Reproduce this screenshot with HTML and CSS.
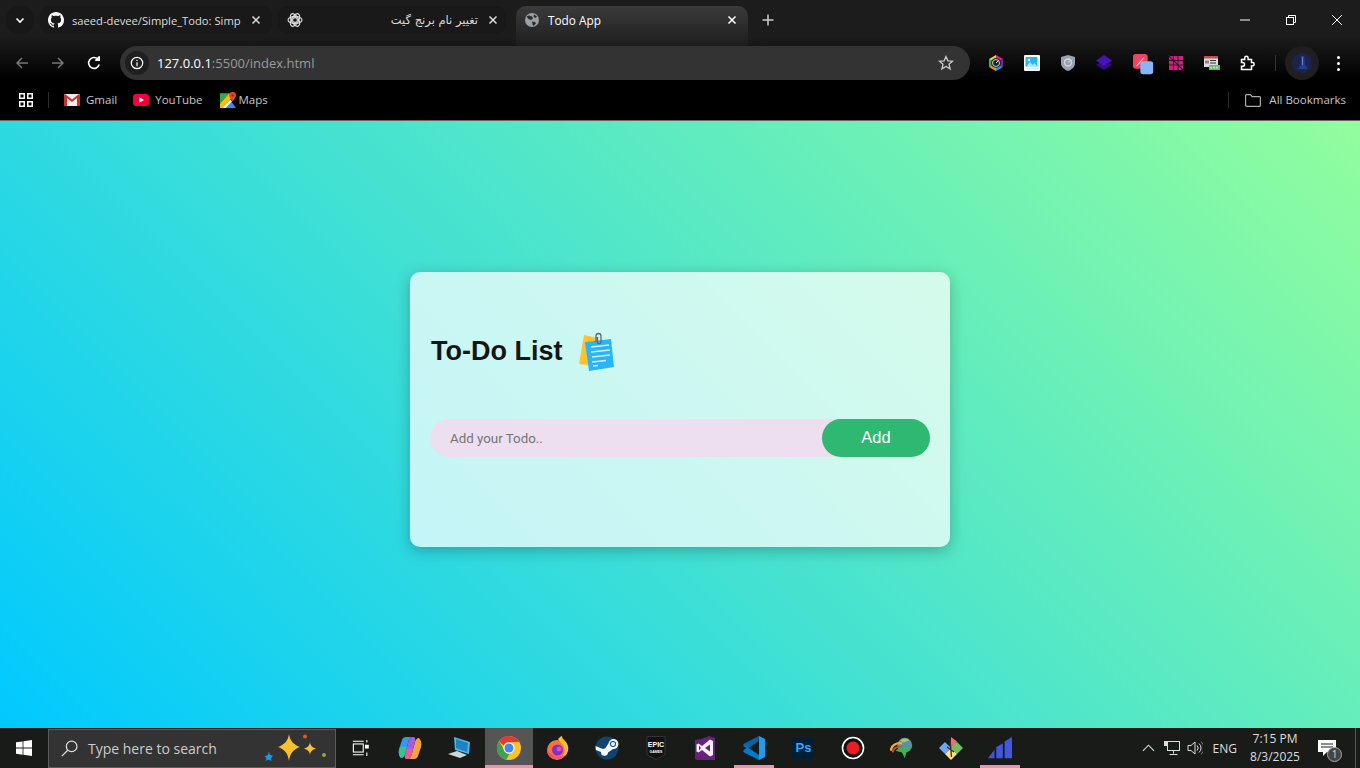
FILE: index.html
```html
<!DOCTYPE html>
<html lang="en">
<head>
<meta charset="UTF-8" />
<meta name="viewport" content="width=device-width, initial-scale=1" />
<title>Todo App</title>
<link rel="stylesheet" href="styles.css">
</head>
<body>

<header class="chrome">
  <!-- Tabs -->
  <div class="tabstrip">
    <div class="tab-menu">
      <svg width="12" height="12" viewBox="0 0 12 12"><path d="M2.5 4.5 6 8l3.5-3.5" fill="none" stroke="#fff" stroke-width="1.6"/></svg>
    </div>
    <div class="tab tab-one">
      <svg class="fav" viewBox="0 0 16 16"><path fill="#fff" d="M8 0C3.58 0 0 3.58 0 8c0 3.54 2.29 6.53 5.47 7.59.4.07.55-.17.55-.38 0-.19-.01-.82-.01-1.49-2.01.37-2.53-.49-2.69-.94-.09-.23-.48-.94-.82-1.13-.28-.15-.68-.52-.01-.53.63-.01 1.08.58 1.23.82.72 1.21 1.87.87 2.33.66.07-.52.28-.87.51-1.07-1.78-.2-3.64-.89-3.64-3.95 0-.87.31-1.59.82-2.15-.08-.2-.36-1.02.08-2.12 0 0 .67-.21 2.2.82.64-.18 1.32-.27 2-.27s1.36.09 2 .27c1.53-1.04 2.2-.82 2.2-.82.44 1.1.16 1.92.08 2.12.51.56.82 1.27.82 2.15 0 3.07-1.87 3.75-3.65 3.95.29.25.54.73.54 1.48 0 1.07-.01 1.93-.01 2.2 0 .21.15.46.55.38A8.01 8.01 0 0 0 16 8c0-4.42-3.58-8-8-8z"/></svg>
      <span class="tab-title">saeed-devee/Simple_Todo: Simp</span>
      <svg class="tab-x" viewBox="0 0 10 10"><path d="M1.5 1.5l7 7m0-7l-7 7" stroke="#ddd" stroke-width="1.5"/></svg>
    </div>
    <div class="tab tab-two">
      <svg class="fav" viewBox="0 0 16 16" fill="none" stroke="#ddd" stroke-width="1.1"><circle cx="8" cy="8" r="2.4"/><ellipse cx="8" cy="8" rx="7" ry="3.6"/><ellipse cx="8" cy="8" rx="7" ry="3.6" transform="rotate(60 8 8)"/><ellipse cx="8" cy="8" rx="7" ry="3.6" transform="rotate(120 8 8)"/></svg>
      <span class="tab-title tab-title-rtl" dir="rtl">تغییر نام برنج گیت</span>
      <svg class="tab-x" viewBox="0 0 10 10"><path d="M1.5 1.5l7 7m0-7l-7 7" stroke="#ddd" stroke-width="1.5"/></svg>
    </div>
    <div class="tab tab-active">
      <svg class="fav" viewBox="0 0 16 16"><circle cx="8" cy="8" r="7" fill="#9aa0a6"/><path fill="#2c2c2c" d="M2.5 4.5 5 3.5l3 1 1 2-2 1.5L4.5 7zM8 9.5l3 .5 1 1.5-2.5 2.5-1-1.5zM10 2.5l3 2-1.5 1.5-2-1z"/></svg>
      <span class="tab-title">Todo App</span>
      <svg class="tab-x" viewBox="0 0 10 10"><path d="M1.5 1.5l7 7m0-7l-7 7" stroke="#fff" stroke-width="1.5"/></svg>
    </div>
    <div class="tab-new">
      <svg width="12" height="12" viewBox="0 0 12 12"><path d="M6 .5v11M.5 6h11" stroke="#ccc" stroke-width="1.5"/></svg>
    </div>
    <div class="win-controls">
      <svg viewBox="0 0 12 12"><path d="M1 6h10" stroke="#fff"/></svg>
      <svg viewBox="0 0 12 12" fill="none" stroke="#fff"><rect x="1.5" y="3.5" width="7" height="7"/><path d="M3.5 3.5v-2h7v7h-2"/></svg>
      <svg viewBox="0 0 12 12"><path d="M1 1l10 10M11 1 1 11" stroke="#fff"/></svg>
    </div>
  </div>

  <!-- Toolbar -->
  <div class="toolbar">
    <div class="nav-btn">
      <svg viewBox="0 0 16 16" fill="none" stroke="#777" stroke-width="1.5"><path d="M14 8H3M8 3 3 8l5 5"/></svg>
    </div>
    <div class="nav-btn">
      <svg viewBox="0 0 16 16" fill="none" stroke="#777" stroke-width="1.5"><path d="M2 8h11M8 3l5 5-5 5"/></svg>
    </div>
    <div class="nav-btn">
      <svg viewBox="0 0 16 16" fill="none" stroke="#fff" stroke-width="1.6"><path d="M13.2 9.500A5.400 5.400 0 1 1 12 4.300"/><path d="M13 1v4.200H8.800" fill="#fff" stroke="none"/><path d="M13.300 1.300v4h-4" stroke-width="1.4"/></svg>
    </div>
    <div class="address">
      <div class="info-chip">
        <svg viewBox="0 0 14 14" fill="none" stroke="#fff" stroke-width="1.2"><circle cx="7" cy="7" r="5.700"/><path d="M7 6.200v4M7 3.700v1.300"/></svg>
      </div>
      <span class="url"><b>127.0.0.1</b>:5500/index.html</span>
      <svg class="star" viewBox="0 0 16 16"><path fill="none" stroke="#ccc" stroke-width="1.3" d="M8 1.500l1.900 4.300 4.600.4-3.500 3 1.100 4.600L8 11.400l-4.100 2.400L5 9.200l-3.500-3 4.600-.4z"/></svg>
    </div>
    <div class="extensions">
      <div class="ext">
        <svg viewBox="0 0 16 16"><path fill="#e91e8c" d="M8 0l7 4-7 4z"/><path fill="#ff9800" d="M1 12l7 4V8z"/><path fill="#2bb673" d="M1 4v8l7-4z"/><path fill="#2196f3" d="M15 12l-7 4V8z"/><path fill="#d7df23" d="M1 4l7-4v8z"/><path fill="#7b1fa2" d="M15 4v8L8 8z"/><circle cx="8" cy="8" r="5" fill="#222"/><circle cx="8" cy="8" r="3.5" fill="none" stroke="#ccc"/><path d="M8 8l2.5-2.5" stroke="#fff"/></svg>
      </div>
      <div class="ext">
        <svg viewBox="0 0 16 16"><rect width="16" height="16" rx="1" fill="#fff"/><rect x="1.5" y="2" width="12" height="10" rx="1" fill="#29b6f6"/><path d="M2 12l4-5 2.5 3 2-2 3 4z" fill="#b3e5fc"/><circle cx="5" cy="5" r="1.2" fill="#fff"/><path d="M3 14h11V5" fill="none" stroke="#b3e5fc"/></svg>
      </div>
      <div class="ext">
        <svg viewBox="0 0 16 16"><path fill="#9aa3ad" d="M8 0l7 2v6c0 4-3 6.500-7 8-4-1.500-7-4-7-8V2z"/><circle cx="8" cy="7.5" r="3.5" fill="none" stroke="#d5dae0" stroke-width="1.3"/><path d="M8 7.5l2.5-2" stroke="#d5dae0"/></svg>
      </div>
      <div class="ext">
        <svg viewBox="0 0 16 16"><path fill="#2c1184" d="M8 5 16 10 8 15 0 10z"/><path fill="#4a12b8" d="M8 0l8 5.500L8 11 0 5.500z"/></svg>
      </div>
      <div class="ext ext-wide">
        <svg viewBox="0 0 24 24"><rect width="16" height="16" rx="3" fill="#f2435f"/><path d="M4 13 12 4" stroke="#ffc2cc" stroke-width="1.5"/><rect x="8" y="8" width="14" height="14" rx="3" fill="#8ab4f8"/></svg>
      </div>
      <div class="ext">
        <svg viewBox="0 0 16 16"><rect x="1" y="1" width="14" height="14" fill="#d81b7f"/><path d="M1 5.500h14M1 10h14M5.500 1v14M10 1v14" stroke="#222"/><path d="M0 0l16 16" stroke="#222" stroke-width="1.2"/></svg>
      </div>
      <div class="ext">
        <svg viewBox="0 0 16 16"><rect y="1" width="14" height="11" fill="#ddd"/><rect y="1" width="14" height="2.5" fill="#b9505a"/><path d="M2 5.500v3M4 5.500v3M6 5.500h6M6 8h6" stroke="#333"/><rect x="5" y="10" width="11" height="5" fill="#66bb6a"/><path d="M7 11.500v2M10 11.500v2M13 11.500v2" stroke="#fff"/></svg>
      </div>
      <div class="ext">
        <svg viewBox="0 0 16 16"><path fill="none" stroke="#fff" stroke-width="1.5" d="M1.500 4.500h3.200V3a1.700 1.700 0 0 1 3.400 0v1.500h3.400v3h1a1.700 1.700 0 0 1 0 3.400h-1v3.600h-10v-3.300h1.200a1.800 1.800 0 0 0 0-3.600H1.500z"/></svg>
      </div>
    </div>
    <span class="tool-divider"></span>
    <div class="avatar">
      <svg viewBox="0 0 20 20"><circle cx="10" cy="10" r="10" fill="#1d2350"/><path d="M9 3h3l1 9 3 4H6l3-4z" fill="#23408f"/><path d="M10 4h1v8h-1z" fill="#5d7fd0"/></svg>
    </div>
    <div class="menu-dots"><i></i><i></i><i></i></div>
  </div>

  <!-- Bookmarks -->
  <div class="bookmarks">
    <svg class="apps-icon" viewBox="0 0 14 14" fill="none" stroke="#fff" stroke-width="1.5"><rect x=".75" y=".75" width="4.5" height="4.5"/><rect x="8.75" y=".75" width="4.5" height="4.5"/><rect x=".75" y="8.75" width="4.5" height="4.5"/><rect x="8.75" y="8.75" width="4.5" height="4.5"/></svg>
    <span class="bm-divider"></span>
    <div class="bm bm-gmail">
      <svg viewBox="0 0 16 12"><rect width="16" height="12" rx="1" fill="#eee"/><path d="M0 1v11h3V4l5 4 5-4v8h3V1l-1-1-7 5.500L1 0z" fill="#c5352b"/></svg>
      <span>Gmail</span>
    </div>
    <div class="bm bm-yt">
      <svg viewBox="0 0 16 12"><rect width="16" height="12" rx="3" fill="#f5003c"/><path d="M6.300 3.300 11 6l-4.700 2.700z" fill="#fff"/></svg>
      <span>YouTube</span>
    </div>
    <div class="bm bm-maps">
      <svg class="bm-square" viewBox="0 0 14 14"><path fill="#34a853" d="M0 1h8L0 10z"/><path fill="#4285f4" d="M3 14 9 7l5 7z"/><path fill="#fbbc04" d="M0 10 8 1l3 3-8 10H0z"/><path fill="#f1f3f4" d="M2.500 14 9 6.500 10.500 8 5 14z"/><path fill="#ea4335" d="M11 0a3 3 0 0 1 3 3c0 2-3 5-3 5S8 5 8 3a3 3 0 0 1 3-3z"/><circle cx="11" cy="3" r="1" fill="#8a2018"/></svg>
      <span>Maps</span>
    </div>
    <span class="bm-divider bm-divider-end"></span>
    <div class="bm bm-all">
      <svg viewBox="0 0 16 13" fill="none" stroke="#aaa" stroke-width="1.2"><path d="M.6 11.400V1.600a1 1 0 0 1 1-1h4l1.500 2h7.300a1 1 0 0 1 1 .9v7.900a1 1 0 0 1-1 1H1.600a1 1 0 0 1-1-1z"/></svg>
      <span>All Bookmarks</span>
    </div>
  </div>
</header>

<main class="page">
  <section class="todo-card">
    <div class="todo-head">
      <h1>To-Do List</h1>
      <svg class="note-icon" viewBox="0 0 38 40">
        <path fill="#fec32c" d="M6 3l14 3-5 28-14-2z"/>
        <path fill="#29b6f6" d="M7 10l26-3 3 28-25 4z"/>
        <path d="M13 15l18-2M13 20l19-2M14 25l18-2M14 30l14-1.500M15 34l5-.5" stroke="#d7ecf7" stroke-width="1.3"/>
        <path d="M18 10V4a2.500 2.500 0 0 1 5 0v6a2 2 0 0 1-3.500 1V5" fill="none" stroke="#5f6a70" stroke-width="1.3"/>
      </svg>
    </div>
    <div class="todo-row">
      <input type="text" placeholder="Add your Todo.." />
      <button>Add</button>
    </div>
  </section>
</main>

<footer class="taskbar">
  <div class="tb-start">
    <svg viewBox="0 0 16 16"><path fill="#fff" d="M0 2.300 6.600 1.400v6.200H0zM7.400 1.300 16 0v7.600H7.400zM0 8.400h6.600v6.300L0 13.700zM7.400 8.400H16V16l-8.600-1.200z"/></svg>
  </div>
  <div class="tb-search">
    <svg class="tb-lens" viewBox="0 0 16 16" fill="none" stroke="#ddd" stroke-width="1.2"><circle cx="10" cy="6" r="5"/><path d="M6.300 9.700.8 15.200"/></svg>
    <span>Type here to search</span>
    <svg class="tb-sparkle" viewBox="0 0 64 30">
      <path fill="#fbc02d" d="M29 0c1 7 5 11 11 13-6 2-10 6-11 14-1-8-5-12-11-14 6-2 10-6 11-13z"/>
      <path fill="#fbc02d" d="M50 8c.5 4 2.500 5.500 6 6.500-3.500 1-5.500 2.500-6 6.500-.5-4-2.500-5.500-6-6.500 3.500-1 5.500-2.500 6-6.500z"/>
      <path fill="#1e9be8" d="M9 18l1 3 3 .5-2 2.500.5 3-3-1.500-3 1.500 1-3-2-2 3-.5z"/>
      <circle cx="45" cy="2.500" r="2" fill="#e2582c"/>
      <circle cx="64" cy="21" r="2" fill="#7cb342"/>
    </svg>
  </div>
  <div class="tb-app tb-taskview">
    <svg viewBox="0 0 20 20" fill="none" stroke="#fff" stroke-width="1.2"><path d="M1 2.500h12M1 17.500h12"/><rect x="1.5" y="5.500" width="11" height="9"/><path d="M16.500 1v3M16.500 15v4"/><rect x="15" y="7" width="3" height="3" fill="#fff"/></svg>
  </div>
  <div class="tb-app">
    <svg viewBox="0 0 24 24"><path fill="#2f9be9" d="M8 1h7c-3 0-4 2-5 6l-3 11c-.5 2-2 4-4 4-2-2-3-5-2-9L4 4c.5-2 2-3 4-3z"/><path fill="#f7a13c" d="M16 23H9c3 0 4-2 5-6l3-11c.5-2 2-4 4-4 2 2 3 5 2 9l-3 9c-.5 2-2 3-4 3z"/><path fill="#a45ce0" d="M10 7c1-4 2-6 5-6 2 0 3 2 2 5l-3 11c-1 4-2 6-5 6-2 0-3-2-2-5z"/><path fill="#ee5a94" d="M9 13h6l-1 4c-1 4-2 6-5 6-1 0-2-1-2-2z"/><path fill="#37c28f" d="M3 11h6l-2 7c-.5 2-2 4-4 4-2-2-3-6-1-10z"/></svg>
  </div>
  <div class="tb-app">
    <svg viewBox="0 0 24 24"><path fill="#53b6e8" d="M7 1l16 5-1 12L8 14z"/><path fill="#1c83c4" d="M9 3l12 4-1 9L9 12z"/><path fill="#cfd6da" d="M1 18l9-3 10 4-7 3z"/></svg>
  </div>
  <div class="tb-app tb-chrome">
    <svg viewBox="0 0 24 24"><circle cx="12" cy="12" r="12" fill="#fbc02d"/><path fill="#e53935" d="M12 0a12 12 0 0 1 10.400 6H12a6 6 0 0 0-5.500 3.500L2.100 5.200A12 12 0 0 1 12 0z"/><path fill="#43a047" d="M2.100 5.200 7 13.500a6 6 0 0 0 5.500 4.500L9 23.700A12 12 0 0 1 2.100 5.200z"/><circle cx="12" cy="12" r="5.600" fill="#fff"/><circle cx="12" cy="12" r="4.500" fill="#4285f4"/></svg>
  </div>
  <div class="tb-app">
    <svg viewBox="0 0 24 24"><circle cx="11" cy="14" r="10" fill="#ff7139"/><path fill="#ffbd2e" d="M12 3c2-2 3-3 4-3 0 2 1 3 4 6 3 4 3 9 0 13-2 2-5 3-7 3 5-2 7-6 5-11-1-3-4-4-6-8z"/><circle cx="11.5" cy="14" r="5.500" fill="#7d2fd0"/><circle cx="13" cy="13" r="2.500" fill="#e84f9f"/><path fill="#ff4f5e" d="M1 14c0 5 4 9 10 9 3 0 6-1 8-4-6 3-13 2-18-5z"/></svg>
  </div>
  <div class="tb-app">
    <svg viewBox="0 0 24 24"><circle cx="12" cy="12" r="11.5" fill="#12426e"/><path fill="#f2f6f9" d="M.5 10 8 13a3.500 3.500 0 0 1 2-.5l3.500-5A5 5 0 1 1 18 13l-5 3.500A3.500 3.500 0 0 1 6 16L.8 14z"/><circle cx="18" cy="8" r="3" fill="#12426e"/><circle cx="18" cy="8" r="2" fill="#f2f6f9"/></svg>
  </div>
  <div class="tb-app">
    <svg viewBox="0 0 20 24"><path fill="#111" stroke="#555" stroke-width=".5" d="M1 .5h18v18l-9 5-9-5z"/><text class="epic-top" x="10" y="11" text-anchor="middle">EPIC</text><text class="epic-sub" x="10" y="17" text-anchor="middle">GAMES</text></svg>
  </div>
  <div class="tb-app">
    <svg viewBox="0 0 24 24"><path fill="#68217a" d="M2 4l6-1 8-3 6 2v22H4l-2-1z"/><path fill="#f4eef7" d="M17 3.500 9 10 5.500 7.500 3.500 8.500v7l2 1L9 14l8 6.500 3-1.500V5zM6 9.500l2 2.500-2 2.500zM12 12l5-3.500v7z"/></svg>
  </div>
  <div class="tb-app tb-open">
    <svg viewBox="0 0 24 24"><path fill="#0065a9" d="M1 8.500 3 7l14-7-.5 5L6 12.500l-3 3-2-1.500 3.500-2z"/><path fill="#007acc" d="M1 15.500 3 17l14 7 0-5L6 11.500l-3-3-2 1.500 3.500 2z"/><path fill="#1f9cf0" d="M17 0l6 3v18l-6 3z"/></svg>
  </div>
  <div class="tb-app">
    <div class="ps-icon">Ps</div>
  </div>
  <div class="tb-app">
    <svg viewBox="0 0 24 24"><circle cx="12" cy="12" r="10.5" fill="#111" stroke="#fff" stroke-width="1.6"/><circle cx="12" cy="12" r="6.5" fill="#ed1c24"/></svg>
  </div>
  <div class="tb-app">
    <svg viewBox="0 0 26 24"><circle cx="16" cy="9" r="8" fill="#5a8fa8"/><path fill="#a8c66c" d="M11 4c3-3 8-3 10 0-3 0-4 2-7 2z"/><path d="M1 15c0-6 6-9 12-8" fill="none" stroke="#e8b32e" stroke-width="2.5"/><path d="M3 17c0-5 5-7 10-6" fill="none" stroke="#d8423a" stroke-width="2"/><path fill="#39b54a" d="M11 11h13l-6 5-2 7-3-6-7-2z"/></svg>
  </div>
  <div class="tb-app">
    <svg viewBox="0 0 24 24"><path fill="#f26d6d" d="M12 1l6 4.500-3 6.500h-3z"/><path fill="#6ec25c" d="M18 6l6 6-6 6-6-6z"/><path fill="#6fa8f0" d="M6 6l6 6-6 6-6-6z"/><path fill="#fbe08a" d="M12 12l6 6-6 6-6-6z"/><path d="M11 3l1.500 18M8 11l7 5" stroke="#3a2a2a" stroke-width="1.3"/></svg>
  </div>
  <div class="tb-app tb-open">
    <svg viewBox="0 0 26 24"><path fill="#4257e0" d="M0 23l7-9v9zM9 11l7-4v16H9zM18 5l8-5v23h-8z"/></svg>
  </div>

  <div class="tb-tray">
    <svg class="tray-caret" viewBox="0 0 14 8"><path d="M1 7l6-6 6 6" fill="none" stroke="#ddd" stroke-width="1.2"/></svg>
    <svg class="tray-net" viewBox="0 0 16 16" fill="none" stroke="#ddd"><rect x="3.5" y="1.5" width="12" height="9"/><rect x=".5" y="1.5" width="3" height="4" fill="#ddd"/><path d="M9.500 10.500v3M5.500 14.500h8"/></svg>
    <svg class="tray-vol" viewBox="0 0 16 16" fill="none" stroke="#ddd"><path d="M1 5.500h3L8 2v12L4 10.500H1z"/><path d="M10 5.500a3.500 3.500 0 0 1 0 5M12 3.500a6 6 0 0 1 0 9"/><path d="M14 1.500a9 9 0 0 1 0 13" stroke="#777"/></svg>
    <span class="tray-lang">ENG</span>
    <div class="tray-clock"><span>7:15 PM</span><span>8/3/2025</span></div>
    <div class="tray-notif">
      <svg viewBox="0 0 18 16"><path fill="#fff" d="M0 0h18v12H9l-4 4v-4H0z"/><path d="M3 4h12M3 7h12" stroke="#1a1c1a"/></svg>
      <span class="notif-badge">1</span>
    </div>
    <span class="tray-peek"></span>
  </div>
</footer>

</body>
</html>
```

FILE: styles.css
```css
* {
  box-sizing: border-box;
}
body {
  margin: 0;
  height: 768px;
  overflow: hidden;
  display: flex;
  flex-direction: column;
  font-family: "Open Sans", "Noto Sans", sans-serif;
}
svg {
  display: block;
}
/* Browser top */
.chrome {
  height: 121px;
  flex: none;
  color: #ddd;
  background: linear-gradient(#1c1c1c 0, #1c1c1c 36px, #000 80px);
  border-bottom: 1px solid #666;
}
.tabstrip {
  height: 46px;
  display: flex;
  align-items: flex-start;
  padding: 6px 0 0 6px;
}
.tab-menu {
  width: 28px;
  height: 28px;
  border-radius: 14px;
  background: #181818;
  display: flex;
  align-items: center;
  justify-content: center;
}
.tab {
  height: 28px;
  display: flex;
  align-items: center;
  border-radius: 10px;
  background: #191919;
  padding: 0 11px 0 8px;
  font-size: 11.8px;
  color: #ddd;
}
.tab-one {
  width: 232px;
  margin-left: 6px;
  font-size: 11.2px;
}
.tab-two {
  width: 228px;
  margin-left: 6px;
  padding: 0 8px 0 9px;
}
.tab-active {
  width: 232px;
  height: 40px;
  margin-left: 10px;
  padding-bottom: 12px;
  border-radius: 10px 10px 0 0;
  background: linear-gradient(#3b3b3b, #1d1d1d);
  color: #fff;
}
.fav {
  width: 16px;
  height: 16px;
  flex: none;
}
.tab-title {
  flex: 1;
  min-width: 0;
  margin-left: 8px;
  white-space: nowrap;
}
.tab-title-rtl {
  font-family: "DejaVu Sans", sans-serif;
  font-size: 11.5px;
}
.tab-x {
  width: 10px;
  height: 10px;
  flex: none;
  margin-left: 10px;
}
.tab-new {
  width: 28px;
  height: 28px;
  margin-left: 6px;
  display: flex;
  align-items: center;
  justify-content: center;
}
.win-controls {
  margin-left: auto;
  height: 28px;
  display: flex;
  align-items: center;
  padding-right: 17px;
  gap: 34px;
}
.win-controls svg {
  width: 12px;
  height: 12px;
}
.toolbar {
  height: 34px;
  display: flex;
  align-items: center;
  padding-left: 4px;
}
.nav-btn {
  width: 36px;
  height: 34px;
  display: flex;
  align-items: center;
  justify-content: center;
}
.nav-btn svg {
  width: 16px;
  height: 16px;
}
.address {
  width: 850px;
  height: 34px;
  margin-left: 8px;
  border-radius: 17px;
  background: #333;
  display: flex;
  align-items: center;
  padding: 0 16px 0 5px;
}
.info-chip {
  width: 24px;
  height: 24px;
  border-radius: 12px;
  background: #1f1f1f;
  display: flex;
  align-items: center;
  justify-content: center;
}
.info-chip svg {
  width: 14px;
  height: 14px;
}
.url {
  flex: 1;
  margin-left: 8px;
  font-size: 13px;
  color: #9a9a9a;
}
.url b {
  font-weight: 400;
  color: #fff;
}
.star {
  width: 16px;
  height: 16px;
}
.extensions {
  display: flex;
  margin-left: 8px;
}
.ext {
  width: 36px;
  height: 34px;
  display: flex;
  align-items: center;
  justify-content: center;
}
.ext svg {
  width: 16px;
  height: 16px;
}
.ext-wide svg {
  width: 22px;
  height: 22px;
  margin: 3px 0 0 8px;
}
.tool-divider {
  width: 1px;
  height: 16px;
  margin-left: 9px;
  background: #333;
}
.avatar {
  width: 34px;
  height: 34px;
  margin-left: 9px;
  border-radius: 17px;
  background: #1f1f1f;
  display: flex;
  align-items: center;
  justify-content: center;
}
.avatar svg {
  width: 20px;
  height: 20px;
}
.menu-dots {
  width: 3px;
  margin-left: 18px;
  display: flex;
  flex-direction: column;
  gap: 3px;
}
.menu-dots i {
  width: 3px;
  height: 3px;
  border-radius: 50%;
  background: #fff;
}
.bookmarks {
  height: 40px;
  display: flex;
  align-items: center;
  padding-left: 19px;
  font-size: 11.5px;
  color: #c6c6c6;
}
.apps-icon {
  width: 14px;
  height: 14px;
}
.bm-divider {
  width: 1px;
  height: 16px;
  margin-left: 15px;
  background: #2c2c2c;
}
.bm {
  display: flex;
  align-items: center;
}
.bm svg {
  width: 16px;
  height: 12px;
}
.bm-square {
  height: 16px !important;
}
.bm span {
  margin: -1px 0 0 6px;
}
.bm-gmail {
  margin-left: 15px;
}
.bm-yt {
  margin-left: 16px;
}
.bm-maps {
  margin-left: 17px;
}
.bm-maps span {
  margin-left: 3px;
}
.bm-divider-end {
  margin-left: auto;
}
.bm-all {
  margin: 0 14px 0 16px;
}
.bm-all span {
  margin-left: 8px;
}
.bm-all svg {
  height: 13px;
}
/* App */
.page {
  flex: 1;
  background: linear-gradient(45deg, #00c9ff, #92fe9d);
  display: flex;
  justify-content: center;
  padding-top: 151px;
}
.todo-card {
  width: 540px;
  height: 275px;
  padding: 50px 20px 0;
  border-radius: 10px;
  background: rgba(255, 255, 255, 0.72);
  box-shadow: 0 4px 15px rgba(0, 0, 0, 0.25);
  font-family: "Liberation Sans", Arial, sans-serif;
}
.todo-head {
  height: 56px;
  display: flex;
  align-items: center;
  margin-bottom: 41px;
}
.todo-head h1 {
  margin: 2px 0 0 1px;
  font-size: 27px;
  color: #151515;
}
.note-icon {
  width: 38px;
  height: 40px;
  margin: 3px 0 0 16px;
}
.todo-row {
  height: 38px;
  display: flex;
  border-radius: 19px;
  background: #eddfef;
}
.todo-row input {
  flex: 1;
  min-width: 0;
  border: none;
  outline: none;
  background: transparent;
  padding: 0 20px;
  font-family: Roboto, sans-serif;
  font-size: 13.33px;
}
.todo-row input::placeholder {
  color: #757575;
}
.todo-row button {
  width: 108px;
  padding: 0 0 2px;
  border: none;
  border-radius: 19px;
  background: #2eb872;
  color: #fff;
  font-family: "Liberation Sans", Arial, sans-serif;
  font-size: 16.5px;
}
/* Windows taskbar */
.taskbar {
  height: 40px;
  flex: none;
  display: flex;
  align-items: center;
  background: #191b19;
  color: #ddd;
}
.tb-start {
  width: 48px;
  height: 40px;
  display: flex;
  align-items: center;
  justify-content: center;
}
.tb-start svg {
  width: 16px;
  height: 16px;
}
.tb-search {
  width: 288px;
  height: 39px;
  margin-top: 1px;
  display: flex;
  align-items: center;
  padding-left: 12px;
  border: 1px solid #5c5c5c;
  background: #333;
  font-size: 14px;
  color: #ccc;
}
.tb-lens {
  width: 17px;
  height: 17px;
  margin-right: 10px;
}
.tb-sparkle {
  width: 64px;
  height: 30px;
  margin-left: auto;
  margin-right: 11px;
  overflow: visible;
}
.tb-app {
  width: 49.2px;
  height: 40px;
  display: flex;
  align-items: center;
  justify-content: center;
}
.tb-app svg {
  width: 24px;
  height: 24px;
}
.tb-taskview svg {
  width: 18px;
  height: 18px;
}
.tb-chrome {
  width: 48px;
  margin-left: 1.4px;
  padding-top: 3px;
  background: #555;
  border-bottom: 3px solid #f48fb1;
}
.tb-open {
  width: 40px;
  margin: 0 4.6px;
  padding-top: 3px;
  border-bottom: 3px solid #f48fb1;
}
.epic-top {
  font: 700 7px "Liberation Sans", sans-serif;
  fill: #fff;
}
.epic-sub {
  font: 700 3.5px "Liberation Sans", sans-serif;
  fill: #fff;
}
.ps-icon {
  width: 22px;
  height: 22px;
  border-radius: 4px;
  background: #001e36;
  color: #31a8ff;
  font: 700 13px/22px "Liberation Sans", sans-serif;
  text-align: center;
}
.tb-tray {
  flex: 1;
  height: 40px;
  display: flex;
  align-items: center;
  justify-content: flex-end;
}
.tray-caret {
  width: 13px;
  height: 8px;
}
.tray-net {
  width: 16px;
  height: 16px;
  margin-left: 9px;
}
.tray-vol {
  width: 16px;
  height: 16px;
  margin-left: 7px;
}
.tray-lang {
  margin-left: 10px;
  font-size: 12px;
}
.tray-clock {
  width: 64px;
  margin-left: 6px;
  display: flex;
  flex-direction: column;
  align-items: center;
  font-size: 12px;
  line-height: 18px;
}
.tray-notif {
  position: relative;
  width: 18px;
  margin: 0 19px 0 11px;
}
.tray-notif svg {
  width: 18px;
  height: 16px;
}
.notif-badge {
  position: absolute;
  right: -6px;
  bottom: -6px;
  width: 15px;
  height: 15px;
  border-radius: 50%;
  border: 1px solid #aaa;
  background: #444;
  color: #ddd;
  font-size: 10px;
  line-height: 13px;
  text-align: center;
}
.tray-peek {
  width: 1px;
  height: 40px;
  margin-right: 4px;
  background: #555;
}
```
